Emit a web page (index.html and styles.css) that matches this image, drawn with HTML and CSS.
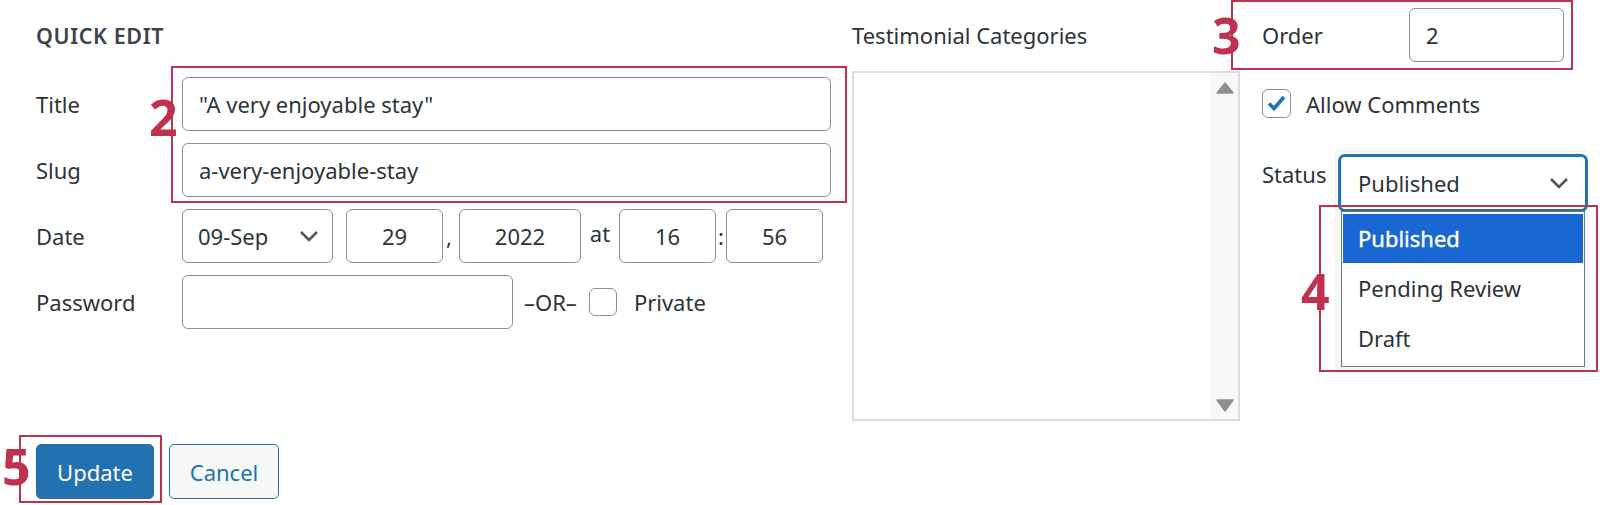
FILE: index.html
```html
<!DOCTYPE html>
<html lang="en">
<head>
<meta charset="utf-8">
<title>Quick Edit</title>
<link rel="stylesheet" href="styles.css">
</head>
<body>
<div class="quick-edit">
  <div class="columns">
    <div class="col-left">
      <div class="legend">QUICK EDIT</div>
      <div class="fields">
        <div class="row">
          <span class="label">Title</span>
          <div class="input wide">"A very enjoyable stay"</div>
        </div>
        <div class="row">
          <span class="label">Slug</span>
          <div class="input wide">a-very-enjoyable-stay</div>
        </div>
        <div class="row">
          <span class="label">Date</span>
          <div class="input select month">
            <span>09-Sep</span>
            <svg class="chevron" width="20" height="12" viewBox="0 0 20 12"><path d="M2 2 L10 10 L18 2" fill="none" stroke="#50575e" stroke-width="2.6"/></svg>
          </div>
          <div class="input num">29</div>
          <span class="sep comma">,</span>
          <div class="input num year">2022</div>
          <span class="sep at">at</span>
          <div class="input num">16</div>
          <span class="sep colon">:</span>
          <div class="input num">56</div>
        </div>
        <div class="row">
          <span class="label">Password</span>
          <div class="input pass"></div>
          <span class="or">–OR–</span>
          <span class="checkbox private-box"></span>
          <span class="private">Private</span>
        </div>
      </div>
    </div>

    <div class="col-mid">
      <div class="mid-title">Testimonial Categories</div>
      <div class="cat-box">
        <div class="scrollbar">
          <svg width="18" height="12" viewBox="0 0 18 12"><path d="M9 1 L17 11 L1 11 Z" fill="#8f8f8f" stroke="#8f8f8f" stroke-width="1.5" stroke-linejoin="round"/></svg>
          <svg width="18" height="13" viewBox="0 0 18 13"><path d="M1 1 L17 1 L9 12 Z" fill="#8f8f8f" stroke="#8f8f8f" stroke-width="1.5" stroke-linejoin="round"/></svg>
        </div>
      </div>
    </div>

    <div class="col-right">
      <div class="order-row">
        <span class="order-label">Order</span>
        <div class="input order-input">2</div>
      </div>
      <div class="comments-row">
        <span class="checkbox checked">
          <svg width="25" height="25" viewBox="0 0 25 25"><path d="M5 12.5 L10 17.5 L20 6" fill="none" stroke="#2271b1" stroke-width="3.6"/></svg>
        </span>
        <span class="comments-label">Allow Comments</span>
      </div>
      <div class="status-row">
        <div class="status-backdrop"></div>
        <span class="status-label">Status</span>
        <div class="status-select">
          <span>Published</span>
          <svg class="chevron" width="20" height="12" viewBox="0 0 20 12"><path d="M2 2 L10 10 L18 2" fill="none" stroke="#50575e" stroke-width="2.6"/></svg>
        </div>
        <div class="dropdown">
          <div class="option selected">Published</div>
          <div class="option">Pending Review</div>
          <div class="option">Draft</div>
        </div>
      </div>
    </div>
  </div>

  <div class="buttons">
    <div class="btn btn-primary">Update</div>
    <div class="btn btn-secondary">Cancel</div>
  </div>

  <div class="anno-box anno-box-2"></div>
  <div class="anno-box anno-box-3"></div>
  <div class="anno-box anno-box-4"></div>
  <div class="anno-box anno-box-5"></div>
  <span class="anno-num anno-num-2">2</span>
  <span class="anno-num anno-num-3">3</span>
  <span class="anno-num anno-num-4">4</span>
  <span class="anno-num anno-num-5">5</span>
</div>
</body>
</html>
```

FILE: styles.css
```css
* { box-sizing: border-box; }

body {
  margin: 0;
  background: #ffffff;
  font-family: "Noto Sans", "Open Sans", sans-serif;
  font-size: 22px;
  color: #2c3338;
}

.quick-edit {
  position: relative;
  width: 1600px;
  height: 505px;
  overflow: hidden;
}

.columns {
  display: flex;
  align-items: flex-start;
}

/* ---------- left column ---------- */
.col-left {
  width: 831px;
  padding-left: 36px;
  flex: none;
}

.legend {
  margin-top: 22px;
  line-height: 27px;
  font-size: 21.5px;
  font-weight: 600;
  letter-spacing: 0.6px;
  color: #3c434a;
}

.fields {
  margin-top: 28px;
  display: flex;
  flex-direction: column;
  gap: 12px;
}

.row {
  display: flex;
  align-items: center;
  height: 54px;
}

.label {
  width: 146px;
  flex: none;
  line-height: 30px;
}

.input {
  height: 54px;
  flex: none;
  border: 1.8px solid #8c8f94;
  border-radius: 6px;
  padding: 0 16px;
  display: flex;
  align-items: center;
  line-height: 30px;
  background: #ffffff;
}

.wide { width: 649px; }

.month {
  width: 151px;
  padding: 0 13px 0 15px;
  justify-content: space-between;
  margin-right: 13px;
}

.chevron { display: block; }

.num {
  width: 97px;
  padding: 0;
  justify-content: center;
}

.year { width: 122px; }

.sep {
  flex: none;
  line-height: 30px;
}

.comma { width: 16px; padding-left: 3px; }
.at { width: 38px; text-align: center; margin-bottom: 6px; }
.colon { width: 10px; text-align: center; }

.pass { width: 331px; }

.or {
  margin-left: 11px;
  line-height: 30px;
}

.checkbox {
  width: 29px;
  height: 29px;
  flex: none;
  border: 1.8px solid #8c8f94;
  border-radius: 6px;
  background: #ffffff;
  display: flex;
  align-items: center;
  justify-content: center;
}

.private-box {
  width: 28px;
  height: 28px;
  margin-left: 12px;
}

.private {
  margin-left: 17px;
  line-height: 30px;
}

/* ---------- middle column ---------- */
.col-mid {
  width: 388px;
  margin-left: 21px;
  flex: none;
}

.mid-title {
  margin-top: 20px;
  line-height: 30px;
}

.cat-box {
  margin-top: 21px;
  height: 350px;
  border: 2px solid #dcdcde;
  display: flex;
  justify-content: flex-end;
}

.scrollbar {
  width: 28px;
  background: #f8f8f8;
  display: flex;
  flex-direction: column;
  justify-content: space-between;
  align-items: center;
  padding: 9px 0 7px 2px;
}

.scrollbar svg { display: block; }

/* ---------- right column ---------- */
.col-right {
  width: 330px;
  margin-left: 22px;
  flex: none;
  padding-top: 8px;
}

.order-row {
  display: flex;
  align-items: center;
  height: 54px;
}

.order-label {
  width: 147px;
  line-height: 30px;
}

.order-input {
  width: 155px;
}

.comments-row {
  margin-top: 27px;
  display: flex;
  align-items: center;
  height: 29px;
}

.comments-label {
  margin-left: 15px;
  line-height: 30px;
}

.status-row {
  margin-top: 37px;
  position: relative;
  display: flex;
  align-items: flex-start;
}

.status-backdrop {
  position: absolute;
  left: 73px;
  top: -6px;
  width: 255px;
  height: 221px;
  background: #f6f7f7;
}

.status-label {
  position: relative;
  width: 77px;
  padding-top: 4px;
  line-height: 30px;
}

.status-select {
  position: relative;
  width: 248px;
  height: 56px;
  border: 2px solid #2271b1;
  box-shadow: 0 0 0 1px #2271b1;
  border-radius: 6px;
  background: #ffffff;
  padding: 0 16px 0 17px;
  display: flex;
  align-items: center;
  justify-content: space-between;
  line-height: 30px;
}

.dropdown {
  position: absolute;
  left: 79px;
  top: 56px;
  width: 244px;
  border: 1px solid #767676;
  background: #ffffff;
  padding: 2px 1px 3px;
}

.option {
  height: 50px;
  line-height: 50px;
  padding-left: 15px;
  color: #2c3338;
}

.option.selected {
  height: 49px;
  line-height: 48px;
  background: #1967d2;
  color: #ffffff;
  -webkit-text-stroke: 0.4px #ffffff;
}

/* ---------- buttons ---------- */
.buttons {
  display: flex;
  gap: 15px;
  margin-top: 23px;
  padding-left: 36px;
}

.btn {
  height: 55px;
  border-radius: 5px;
  display: flex;
  align-items: center;
  justify-content: center;
  line-height: 30px;
}

.btn-primary {
  width: 118px;
  background: #2271b1;
  border: 1.6px solid #2271b1;
  color: #ffffff;
}

.btn-secondary {
  width: 110px;
  background: #f6f7f7;
  border: 1.6px solid #2271b1;
  color: #2271b1;
}

/* ---------- annotations ---------- */
.anno-box {
  position: absolute;
  border: 2px solid #c0304f;
}

.anno-box-2 { left: 171px; top: 66px; width: 676px; height: 137px; }
.anno-box-3 { left: 1231px; top: 0px; width: 342px; height: 70px; }
.anno-box-4 { left: 1319px; top: 205px; width: 279px; height: 167px; }
.anno-box-5 { left: 19px; top: 435px; width: 143px; height: 68px; }

.anno-num {
  position: absolute;
  font-family: "Noto Sans", "Open Sans", sans-serif;
  font-weight: 700;
  font-size: 50px;
  line-height: 50px;
  color: #c0304f;
}

.anno-num-2 { left: 149px; top: 92px; }
.anno-num-3 { left: 1212px; top: 10px; }
.anno-num-4 { left: 1301px; top: 266px; }
.anno-num-5 { left: 2px; top: 441px; }
```
